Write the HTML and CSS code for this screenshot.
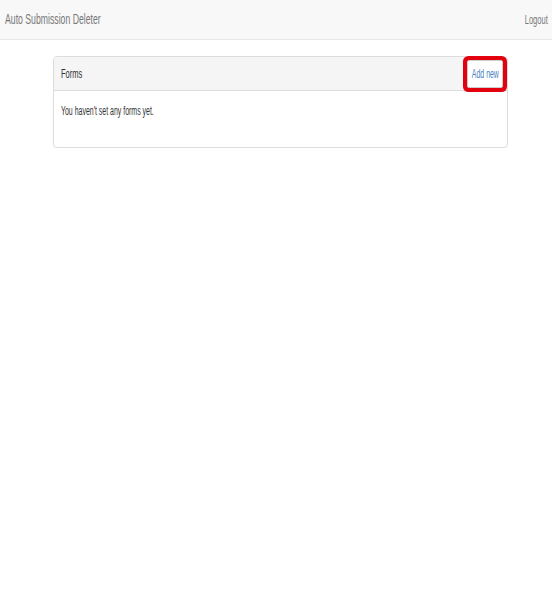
FILE: index.html
```html
<!DOCTYPE html>
<html lang="en">
<head>
    <meta charset="UTF-8">
    <meta name="viewport" content="width=device-width, initial-scale=1.0">
    <title>Auto Submission Deleter</title>
    <link rel="stylesheet" href="styles.css">
</head>
<body>
    <nav class="navbar">
        <a class="brand" href="#"><span class="narrow">Auto Submission Deleter</span></a>
        <a class="logout" href="#"><span class="narrow narrow-right">Logout</span></a>
    </nav>
    <div class="container">
        <div class="panel">
            <div class="panel-heading">
                <span class="narrow">Forms</span>
                <a class="btn" href="#"><span class="narrow narrow-center">Add new</span></a>
            </div>
            <div class="panel-body">
                <span class="narrow">You haven't set any forms yet.</span>
            </div>
        </div>
    </div>
</body>
</html>
```

FILE: styles.css
```css
body {
    margin: 0;
    font-family: "Liberation Sans", Arial, sans-serif;
    font-size: 13px;
    color: #333;
    background-color: #fff;
}
a {
    text-decoration: none;
}
.narrow {
    display: inline-block;
    transform: scaleX(0.58);
    transform-origin: left center;
    white-space: nowrap;
}
.narrow-right {
    transform-origin: right center;
}
.narrow-center {
    transform-origin: center center;
}
.navbar {
    display: flex;
    justify-content: space-between;
    align-items: center;
    height: 39px;
    padding: 0 4px 0 5px;
    background-color: #f8f8f8;
    border-bottom: 1px solid #e7e7e7;
}
.brand {
    color: #777;
    font-size: 15px;
    margin-top: -2px;
}
.logout {
    color: #777;
    font-size: 13px;
}
.container {
    padding: 16px 44px 0 53px;
}
.panel {
    border: 1px solid #ddd;
    border-radius: 4px;
    box-shadow: 0 1px 1px rgba(0, 0, 0, 0.05);
}
.panel-heading {
    display: flex;
    justify-content: space-between;
    align-items: center;
    height: 33px;
    padding: 0 4px 0 7px;
    background-color: #f5f5f5;
    border-bottom: 1px solid #ddd;
    border-radius: 3px 3px 0 0;
    font-size: 13px;
}
.btn {
    display: flex;
    align-items: center;
    justify-content: center;
    width: 34px;
    height: 26px;
    background-color: #fff;
    border: 1px solid #ccc;
    border-radius: 2px;
    color: #4a7fc1;
    font-size: 12px;
    box-shadow: 0 0 0 4px #e3000f;
}
.panel-body {
    height: 43px;
    padding: 13px 7px 0;
    font-size: 12px;
}
```
